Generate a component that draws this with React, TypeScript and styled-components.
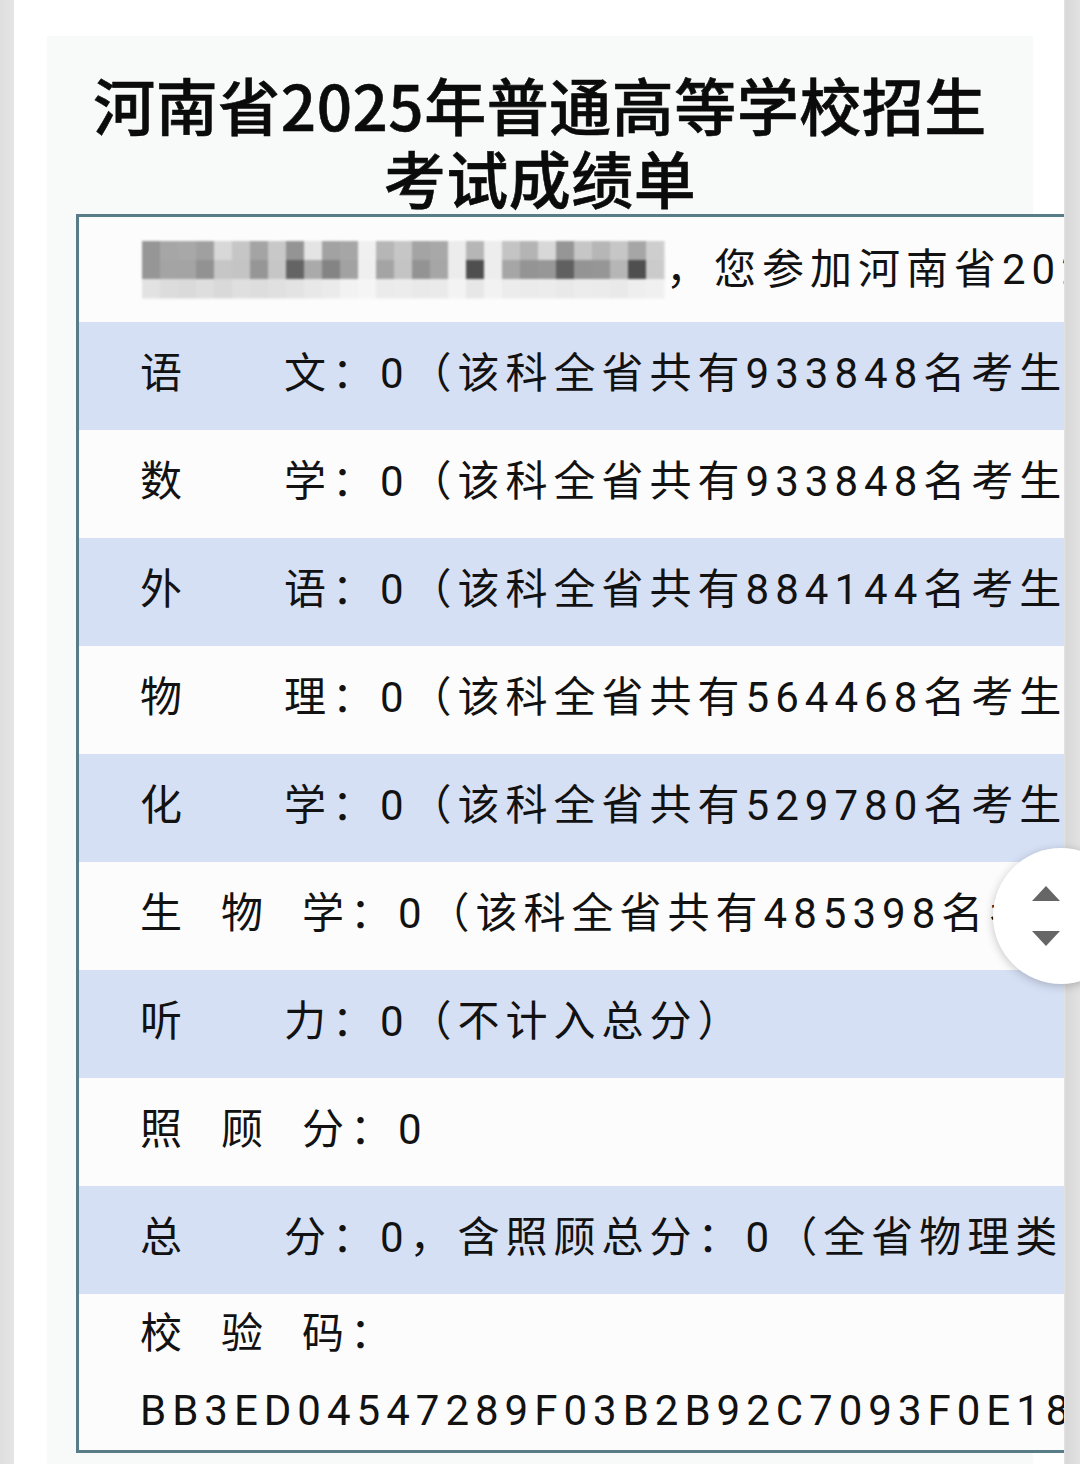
import React from "react";
import styled, { createGlobalStyle } from "styled-components";

const GlobalStyle = createGlobalStyle`
  html, body { margin: 0; padding: 0; }
  body {
    background: #e1e1e1;
    font-family: Roboto, "Noto Sans CJK SC", "Noto Sans", sans-serif;
    color: #111;
  }
`;

const Page = styled.div`
  position: relative;
  width: 1080px;
  height: 1464px;
  display: flex;
  box-sizing: border-box;
  padding: 0 16px 0 14px;
  background: linear-gradient(90deg, #dedede 0, #e4e4e4 12px, #e4e4e4 1064px, #d8d8d8 1066px, #e2e2e2 1080px);
  overflow: hidden;
`;

const Frame = styled.div`
  flex: 1;
  background: #ffffff;
  overflow: hidden;
  padding: 36px 0 0 33px;
  box-sizing: border-box;
`;

const Card = styled.div`
  width: 986px;
  height: 100%;
  background: #f8f9f9;
  padding-top: 32px;
  box-sizing: border-box;
`;

const Title = styled.h1`
  margin: 0;
  text-align: center;
  font-family: "Noto Sans CJK SC", "Noto Sans", sans-serif;
  font-weight: 500;
  font-size: 62px;
  line-height: 73px;
  color: #0b0b0b;
  letter-spacing: 0.5px;
  -webkit-text-stroke: 0.6px #0b0b0b;
`;

const Table = styled.div`
  margin-left: 29px;
  width: 1400px;
  border: 3px solid #587d89;
  border-right: none;
  background: #fcfcfc;
`;

const Row = styled.div<{ $blue?: boolean; $h?: number; $lift?: number }>`
  display: flex;
  flex-direction: column;
  justify-content: center;
  align-items: flex-start;
  height: ${(p) => p.$h ?? 108}px;
  box-sizing: border-box;
  padding-left: 61px;
  padding-bottom: ${(p) => p.$lift ?? 0}px;
  background: ${(p) => (p.$blue ? "#d6e0f5" : "#fcfcfc")};
  white-space: nowrap;
`;

const Line = styled.div`
  display: flex;
  align-items: center;
  font-size: 42px;
  line-height: 77px;
  letter-spacing: 6px;
  color: #121212;
`;

const Label = styled.span<{ $w: number }>`
  display: inline-flex;
  justify-content: space-between;
  width: ${(p) => p.$w}px;
`;

const Text = styled.span`
  white-space: pre;
`;

const Mosaic = styled.svg`
  display: block;
  margin-left: 2px;
  filter: blur(0.8px);
`;

const ScrollKnob = styled.div`
  position: absolute;
  left: 993px;
  top: 848px;
  width: 136px;
  height: 136px;
  border-radius: 50%;
  background: #ffffff;
  box-shadow: 0 2px 10px rgba(0, 0, 0, 0.22);
  display: flex;
  flex-direction: column;
  align-items: flex-start;
  justify-content: center;
  gap: 30px;
  padding-left: 39px;
  box-sizing: border-box;
`;

const Arrow = styled.svg`
  display: block;
`;

const row1 = ["#969696","#a6a6a6","#a8a8a8","#a0a0a0","#d8d8d8","#c6c6c6","#a4a4a4","#c8c8c8","#949494","#e4e4e4","#a2a2a2","#a6a6a6","#f0f0f0","#b6b6b6","#c6c6c6","#a4a4a4","#a8a8a8","#ececec","#b6b6b6","#ededed","#c4c4c4","#b4b4b4","#d8d8d8","#969696","#c6c6c6","#b6b6b6","#c6c6c6","#a6a6a6","#cecece"];
const row2 = ["#969696","#a4a4a4","#a4a4a4","#929292","#c6c6c6","#c4c4c4","#969696","#c6c6c6","#646464","#aaaaaa","#848484","#a2a2a2","#efefef","#a4a4a4","#c4c4c4","#939393","#a6a6a6","#ececec","#4f4f4f","#ededed","#a6a6a6","#949494","#979797","#606060","#949494","#969696","#b6b6b6","#4f4f4f","#cbcbcb"];
const row3 = ["#e2e2e2","#dcdcdc","#dadada","#dedede","#d9d9d9","#dfdfdf","#dddddd","#e0e0e0","#e3e3e3","#e8e8e8","#ebebeb","#f2f2f2","#f5f5f5","#ebebeb","#ececec","#e9e9e9","#eaeaea","#f3f3f3","#e7e7e7","#f2f2f2","#ececec","#ebebeb","#ececec","#e9e9e9","#ececec","#ebebeb","#e9e9e9","#eeeeee","#f0f0f0"];

function NameMosaic() {
  const cw = 18;
  return (
    <Mosaic width={524} height={58} viewBox="0 0 524 58">
      {[row1, row2, row3].map((r, ri) =>
        r.map((c, ci) => (
          <rect key={`${ri}-${ci}`} x={ci * cw} y={ri * 19} width={cw + 0.5} height={19.5} fill={c} />
        ))
      )}
    </Mosaic>
  );
}

type Subject = { chars: string[]; value: string };

const subjects: Subject[] = [
  { chars: ["语", "文"], value: "0（该科全省共有933848名考生，你的成绩位次为：933848）" },
  { chars: ["数", "学"], value: "0（该科全省共有933848名考生，你的成绩位次为：933848）" },
  { chars: ["外", "语"], value: "0（该科全省共有884144名考生，你的成绩位次为：884144）" },
  { chars: ["物", "理"], value: "0（该科全省共有564468名考生，你的成绩位次为：564468）" },
  { chars: ["化", "学"], value: "0（该科全省共有529780名考生，你的成绩位次为：529780）" },
  { chars: ["生", "物", "学"], value: "0（该科全省共有485398名考生，你的成绩位次为：485398）" },
  { chars: ["听", "力"], value: "0（不计入总分）" },
  { chars: ["照", "顾", "分"], value: "0" },
  { chars: ["总", "分"], value: "0，含照顾总分：0（全省物理类：考生位次）" },
];

function SubjectLabel({ chars }: { chars: string[] }) {
  return (
    <Label $w={chars.length === 2 ? 192 : 210}>
      {chars.map((c) => (
        <span key={c}>{c}</span>
      ))}
    </Label>
  );
}

export default function App() {
  return (
    <>
      <GlobalStyle />
      <Page>
        <Frame>
          <Card>
            <Title>
              河南省2025年普通高等学校招生
              <br />
              考试成绩单
            </Title>
            <Table>
              <Row $h={105}>
                <Line>
                  <NameMosaic />
                  <Text>，您参加河南省2025年普通高等学校招生考试，成绩如下：</Text>
                </Line>
              </Row>
              {subjects.map((s, i) => (
                <Row key={i} $blue={i % 2 === 0} $lift={6}>
                  <Line>
                    <SubjectLabel chars={s.chars} />
                    <Text>：{s.value}</Text>
                  </Line>
                </Row>
              ))}
              <Row $h={156}>
                <Line>
                  <SubjectLabel chars={["校", "验", "码"]} />
                  <Text>：</Text>
                </Line>
                <Line>
                  <Text>BB3ED04547289F03B2B92C7093F0E18A6</Text>
                </Line>
              </Row>
            </Table>
          </Card>
        </Frame>
        <ScrollKnob>
          <Arrow width="28" height="15" viewBox="0 0 28 15">
            <polygon points="0,15 28,15 14,0" fill="#666666" />
          </Arrow>
          <Arrow width="28" height="15" viewBox="0 0 28 15">
            <polygon points="0,0 28,0 14,15" fill="#666666" />
          </Arrow>
        </ScrollKnob>
      </Page>
    </>
  );
}
